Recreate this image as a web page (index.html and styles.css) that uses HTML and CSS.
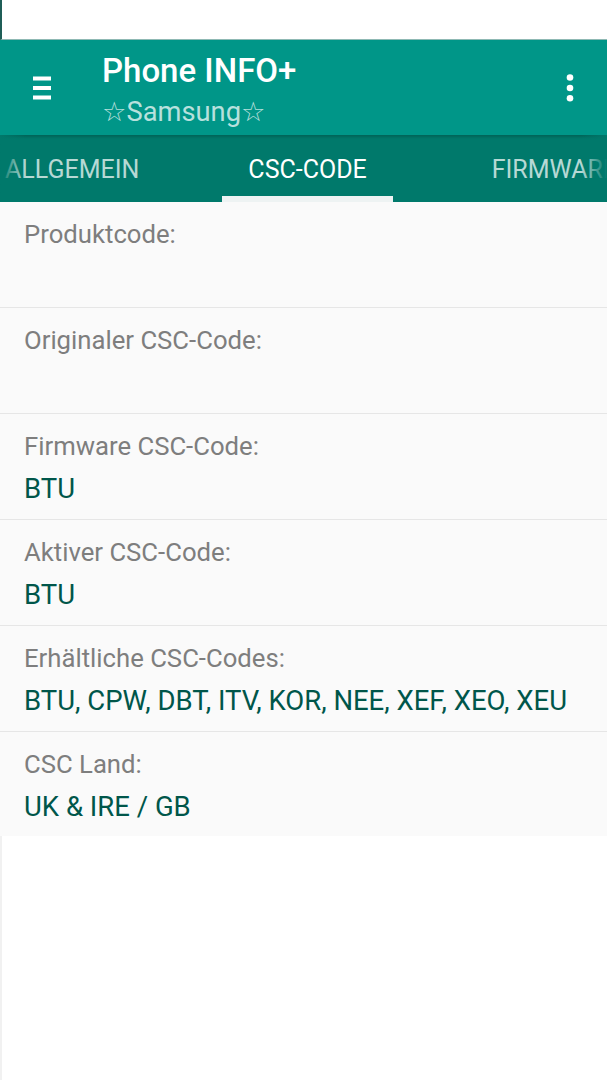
FILE: index.html
```html
<!DOCTYPE html>
<html lang="de">
<head>
<meta charset="utf-8">
<title>Phone INFO+</title>
<link rel="stylesheet" href="styles.css">
</head>
<body>
<div class="statusbar"></div>
<header class="appbar">
  <div class="toolbar">
    <div class="menu-btn">
      <svg width="18" height="24" viewBox="0 0 18 24"><rect x="0" y="0.5" width="18" height="4" fill="#fff"/><rect x="0" y="10" width="18" height="4" fill="#fff"/><rect x="0" y="19.5" width="18" height="4" fill="#fff"/></svg>
    </div>
    <div class="titles">
      <div class="title">Phone INFO+</div>
      <div class="subtitle">☆Samsung☆</div>
    </div>
    <div class="overflow-btn">
      <svg width="8" height="28" viewBox="0 0 8 28"><circle cx="4" cy="3.5" r="3.3" fill="#fff"/><circle cx="4" cy="14" r="3.3" fill="#fff"/><circle cx="4" cy="24.3" r="3.3" fill="#fff"/></svg>
    </div>
  </div>
  <nav class="tabs">
    <div class="tab tab-first">ALLGEMEIN</div>
    <div class="tab tab-active">CSC-CODE</div>
    <div class="tab tab-last">FIRMWARE</div>
  </nav>
</header>
<main class="list">
  <div class="row">
    <div class="label">Produktcode:</div>
    <div class="value"></div>
  </div>
  <div class="row">
    <div class="label">Originaler CSC-Code:</div>
    <div class="value"></div>
  </div>
  <div class="row">
    <div class="label">Firmware CSC-Code:</div>
    <div class="value">BTU</div>
  </div>
  <div class="row">
    <div class="label">Aktiver CSC-Code:</div>
    <div class="value">BTU</div>
  </div>
  <div class="row">
    <div class="label">Erhältliche CSC-Codes:</div>
    <div class="value">BTU, CPW, DBT, ITV, KOR, NEE, XEF, XEO, XEU</div>
  </div>
  <div class="row row-last">
    <div class="label">CSC Land:</div>
    <div class="value">UK &amp; IRE / GB</div>
  </div>
</main>
<div class="blank"></div>
</body>
</html>
```
FILE: styles.css
```css
* { box-sizing: border-box; }
html, body {
  margin: 0;
  padding: 0;
  background: #ffffff;
  font-family: Roboto, "Noto Sans", "DejaVu Sans", sans-serif;
}
body {
  width: 607px;
  height: 1080px;
  overflow: hidden;
  display: flex;
  flex-direction: column;
}
.statusbar {
  height: 40px;
  flex: none;
  background: #ffffff;
  border-left: 2px solid #1f5e57;
  border-bottom: 1px solid #8fb9b4;
}
.appbar {
  background: #009688;
  flex: none;
}
.toolbar {
  height: 95px;
  display: flex;
  align-items: flex-start;
}
.menu-btn {
  width: 102px;
  flex: none;
  padding: 36px 0 0 33px;
}
.menu-btn svg { display: block; }
.titles {
  flex: 1;
  display: flex;
  flex-direction: column;
  color: #fff;
  padding-top: 12px;
}
.title {
  font-size: 33px;
  font-weight: 500;
  line-height: 38px;
}
.subtitle {
  margin-top: 5px;
  font-size: 27.3px;
  line-height: 34px;
  color: rgba(255,255,255,0.72);
  font-family: Roboto, "DejaVu Sans", sans-serif;
}
.overflow-btn {
  width: 74px;
  flex: none;
  padding: 34px 0 0 33px;
}
.overflow-btn svg { display: block; }
.tabs {
  position: relative;
  height: 67px;
  background: #00796b;
  box-shadow: inset 0 4px 3px -2px rgba(0,0,0,0.18);
  display: flex;
  align-items: stretch;
  overflow: hidden;
  white-space: nowrap;
}
.tabs::before, .tabs::after {
  content: "";
  position: absolute;
  top: 0;
  bottom: 0;
  width: 26px;
  z-index: 1;
}
.tabs::before { left: 0; background: linear-gradient(to right, #00796b, rgba(0,121,107,0)); }
.tabs::after { right: 0; background: linear-gradient(to left, #00796b, rgba(0,121,107,0)); }
.tab {
  font-size: 25px;
  color: rgba(255,255,255,0.72);
  display: flex;
  align-items: center;
  padding-top: 2px;
  flex: none;
}
.tab-first { padding-left: 5px; }
.tab-active {
  color: #fff;
  margin-left: 83px;
  margin-right: 99px;
  padding: 8px 26px 0;
  border-bottom: 6px solid #eef3f3;
}
.list {
  background: #fafafa;
  flex: none;
}
.row {
  padding: 17px 24px 13px;
  border-bottom: 1px solid #e6e6e6;
  height: 106px;
}
.row-last { border-bottom: none; height: 104px; }
.label {
  font-size: 25.7px;
  line-height: 30px;
  color: #7e7e7e;
}
.value {
  margin-top: 12px;
  font-size: 27.5px;
  line-height: 32px;
  color: #00564a;
  min-height: 32px;
}
.blank {
  flex: 1;
  background: #ffffff;
  border-left: 2px solid #f1f1f1;
}
```
